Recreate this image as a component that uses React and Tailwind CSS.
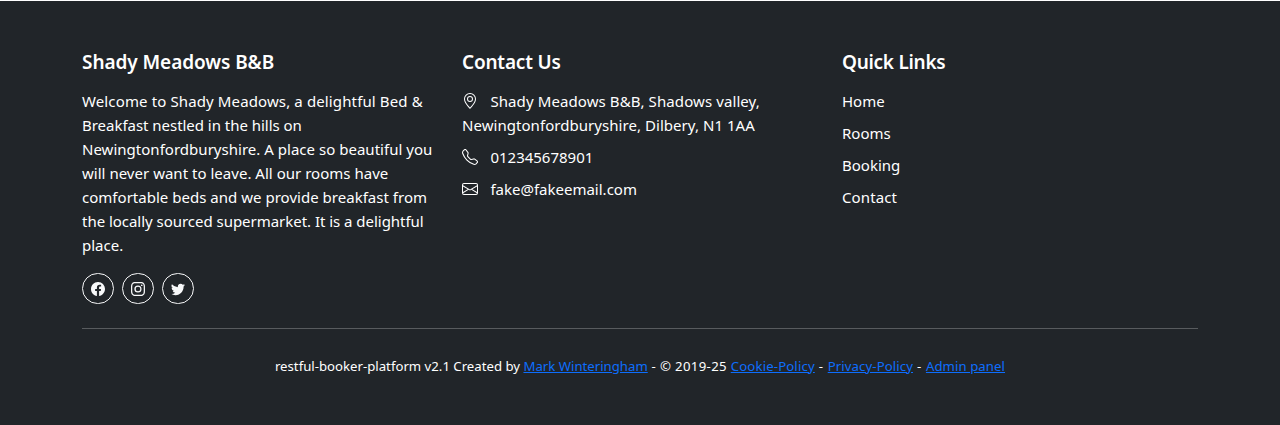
import React from "react";
import { BsGeoAlt, BsTelephone, BsEnvelope, BsFacebook, BsInstagram, BsTwitter } from "react-icons/bs";

const about = [
  ["Welcome to Shady Meadows, a delightful Bed &", "tracking-[0.125px]"],
  ["Breakfast nestled in the hills on", "tracking-[-0.03px]"],
  ["Newingtonfordburyshire. A place so beautiful you", "tracking-[0.02px]"],
  ["will never want to leave. All our rooms have", "tracking-[0.02px]"],
  ["comfortable beds and we provide breakfast from", "tracking-[0.02px]"],
  ["the locally sourced supermarket. It is a delightful", "tracking-[-0.03px]"],
  ["place.", "tracking-normal"],
];

function Heading({ children, className }) {
  return <h5 className={`mb-[15px] h-6 text-[19px] leading-6 font-semibold whitespace-nowrap ${className}`}>{children}</h5>;
}

function Social({ icon: Icon, label }) {
  return (
    <a href="#" aria-label={label} className="flex h-[31px] w-8 items-center justify-center rounded-full border border-[#f8f9fa] text-[#f8f9fa]">
      <Icon size={14} />
    </a>
  );
}

function FooterLink({ children, className = "" }) {
  return <a href="#" className={`text-[#0d6efd] underline ${className}`}>{children}</a>;
}

export default function App() {
  return (
    <div className="h-[425px] bg-white pt-px font-['Noto_Sans',sans-serif] text-[15px] leading-6 text-white">
      <footer className="h-full bg-[#212529] px-[82px] pt-[49px]">
        <div className="grid grid-cols-[380px_380px_1fr]">
          <section>
            <Heading className="tracking-[-0.07px]">Shady Meadows B&amp;B</Heading>
            <p className="mb-4">
              {about.map(([line, tracking]) => (
                <span key={line} className={`block whitespace-nowrap ${tracking}`}>{line}</span>
              ))}
            </p>
            <div className="flex gap-2">
              <Social icon={BsFacebook} label="Facebook" />
              <Social icon={BsInstagram} label="Instagram" />
              <Social icon={BsTwitter} label="Twitter" />
            </div>
          </section>
          <section>
            <Heading className="tracking-[-0.2px]">Contact Us</Heading>
            <ul className="space-y-2 whitespace-nowrap">
              <li>
                <div className="flex items-center"><BsGeoAlt size={16} className="mr-[12.4px]" /><span className="tracking-[0.1px]">Shady Meadows B&amp;B, Shadows valley,</span></div>
                <span className="block tracking-[0.05px]">Newingtonfordburyshire, Dilbery, N1 1AA</span>
              </li>
              <li className="flex items-center"><BsTelephone size={16} className="mr-[12.4px]" /><span>012345678901</span></li>
              <li className="flex items-center"><BsEnvelope size={16} className="mr-[12.4px]" /><span>fake@fakeemail.com</span></li>
            </ul>
          </section>
          <section>
            <Heading className="tracking-[-0.28px]">Quick Links</Heading>
            <ul className="space-y-2">
              <li>Home</li>
              <li>Rooms</li>
              <li>Booking</li>
              <li className="tracking-[0.1px]">Contact</li>
            </ul>
          </section>
        </div>
        <hr className="mt-6 border-t border-white/25" />
        <p className="mt-[27px] text-center text-[13.2px] leading-[21px] whitespace-nowrap">
          restful-booker-platform v2.1 Created by <FooterLink>Mark Winteringham</FooterLink>
          <span className="tracking-[0.35px]"> - © 2019-25 </span>
          <FooterLink className="tracking-[0.14px]">Cookie-Policy</FooterLink>
          <span className="tracking-[0.6px]"> - </span>
          <FooterLink className="tracking-[0.09px]">Privacy-Policy</FooterLink>
          <span className="tracking-[0.6px]"> - </span>
          <FooterLink className="tracking-[0.07px]">Admin panel</FooterLink>
        </p>
      </footer>
    </div>
  );
}
